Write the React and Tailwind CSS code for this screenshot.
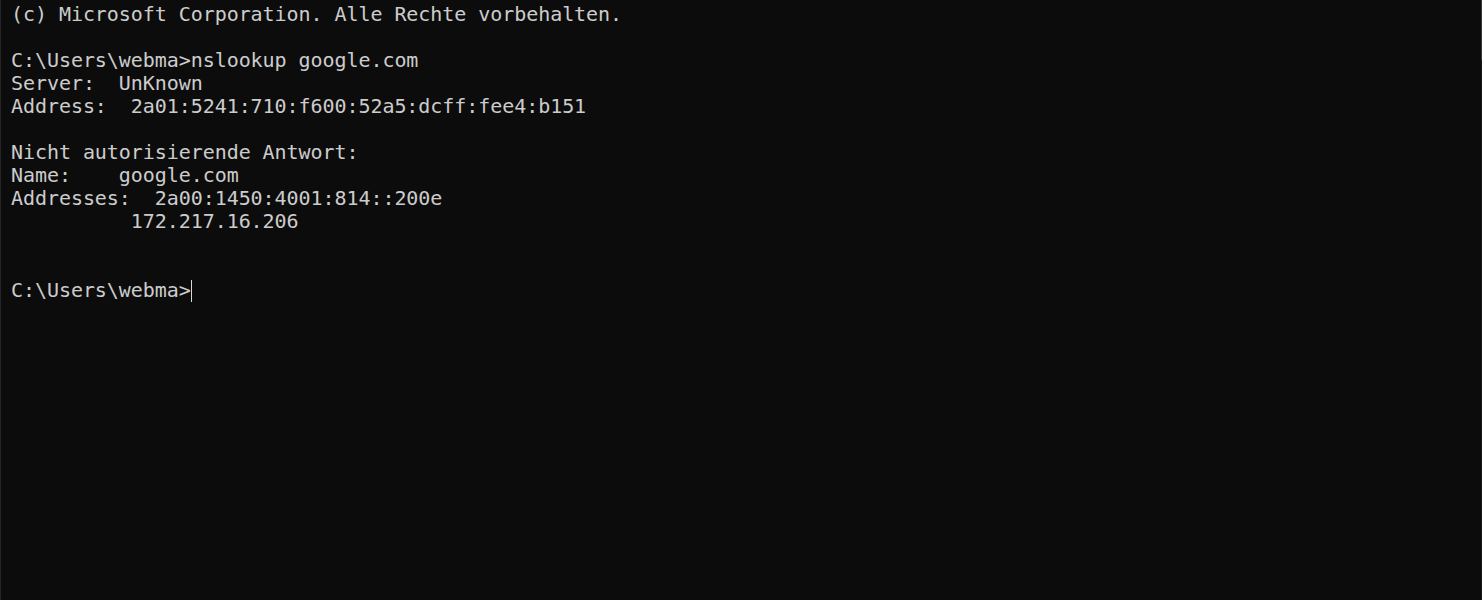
const lines = [
  '(c) Microsoft Corporation. Alle Rechte vorbehalten.',
  '',
  'C:\\Users\\webma>nslookup google.com',
  'Server:  UnKnown',
  'Address:  2a01:5241:710:f600:52a5:dcff:fee4:b151',
  '',
  'Nicht autorisierende Antwort:',
  'Name:    google.com',
  'Addresses:  2a00:1450:4001:814::200e',
  '          172.217.16.206',
  '',
  '',
];

export default function App() {
  return (
    <div className="flex h-[600px] w-full bg-[#0c0c0c] border-l border-[#262626]">
      <div
        className="flex-1 pl-[10px] pt-[3px] text-[20px] leading-[23px] tracking-[-0.06px] text-[#cccccc]"
        style={{ fontFamily: '"DejaVu Sans Mono", "Liberation Mono", monospace' }}
      >
        {lines.map((line, i) => (
          <div key={i} className="h-[23px] whitespace-pre">
            {line}
          </div>
        ))}
        <div className="flex h-[23px] items-center whitespace-pre">
          <span>C:\Users\webma&gt;</span>
          <span className="h-[22px] w-px bg-[#d8d8d8]" />
        </div>
      </div>
      <div className="flex w-px flex-col">
        <div className="h-[60px] bg-[#3a3a3a]" />
        <div className="flex-1 bg-[#161616]" />
      </div>
    </div>
  );
}
